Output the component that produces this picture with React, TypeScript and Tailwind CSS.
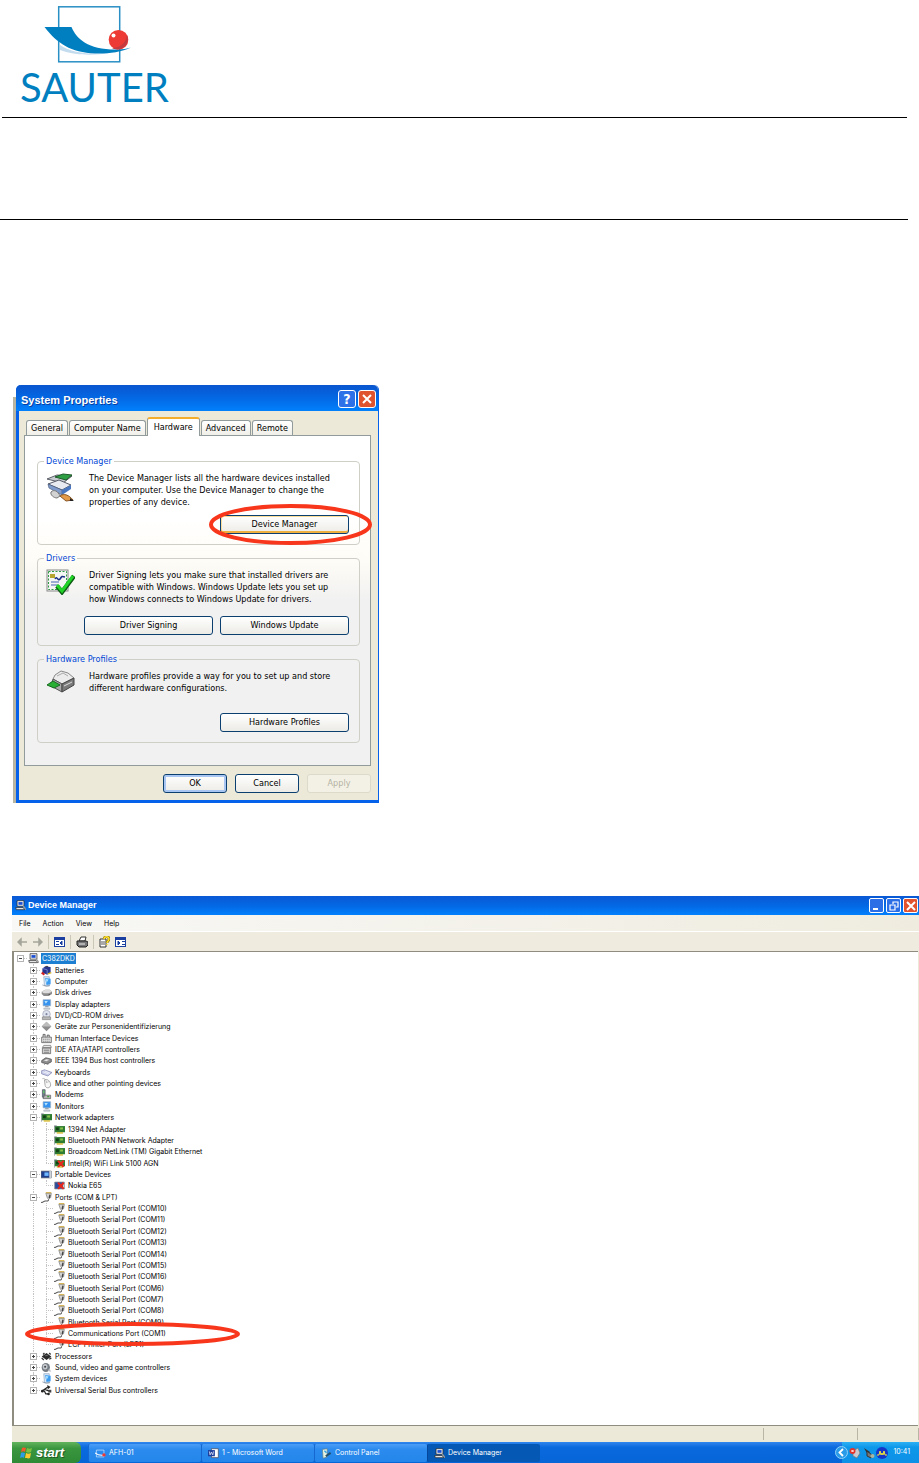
import React from 'react'
import { clsx } from 'clsx'

type IconName =
  | 'pc' | 'battery' | 'computer' | 'disk' | 'dvd' | 'diamond' | 'hid' | 'ide' | 'ieee'
  | 'keyboard' | 'mouse' | 'modem' | 'monitor' | 'nic' | 'nicOff' | 'portable'
  | 'phoneOff' | 'port' | 'cpu' | 'sound' | 'usb'

interface TreeItem {
  label: string
  icon: IconName
  level: 0 | 1 | 2
  open?: boolean
  last?: boolean
  circled?: boolean
}

const serialPort = (n: number): TreeItem => ({
  label: `Bluetooth Serial Port (COM${n})`,
  icon: 'port',
  level: 2,
})

const tree: TreeItem[] = [
  { label: 'C382DKD', icon: 'pc', level: 0, open: true },
  { label: 'Batteries', icon: 'battery', level: 1 },
  { label: 'Computer', icon: 'computer', level: 1 },
  { label: 'Disk drives', icon: 'disk', level: 1 },
  { label: 'Display adapters', icon: 'monitor', level: 1 },
  { label: 'DVD/CD-ROM drives', icon: 'dvd', level: 1 },
  { label: 'Geräte zur Personenidentifizierung', icon: 'diamond', level: 1 },
  { label: 'Human Interface Devices', icon: 'hid', level: 1 },
  { label: 'IDE ATA/ATAPI controllers', icon: 'ide', level: 1 },
  { label: 'IEEE 1394 Bus host controllers', icon: 'ieee', level: 1 },
  { label: 'Keyboards', icon: 'keyboard', level: 1 },
  { label: 'Mice and other pointing devices', icon: 'mouse', level: 1 },
  { label: 'Modems', icon: 'modem', level: 1 },
  { label: 'Monitors', icon: 'monitor', level: 1 },
  { label: 'Network adapters', icon: 'nic', level: 1, open: true },
  { label: '1394 Net Adapter', icon: 'nic', level: 2 },
  { label: 'Bluetooth PAN Network Adapter', icon: 'nic', level: 2 },
  { label: 'Broadcom NetLink (TM) Gigabit Ethernet', icon: 'nic', level: 2 },
  { label: 'Intel(R) WiFi Link 5100 AGN', icon: 'nicOff', level: 2, last: true },
  { label: 'Portable Devices', icon: 'portable', level: 1, open: true },
  { label: 'Nokia E65', icon: 'phoneOff', level: 2, last: true },
  { label: 'Ports (COM & LPT)', icon: 'port', level: 1, open: true },
  ...[10, 11, 12, 13, 14, 15, 16, 6, 7, 8, 9].map(serialPort),
  { label: 'Communications Port (COM1)', icon: 'port', level: 2, circled: true },
  { label: 'ECP Printer Port (LPT1)', icon: 'port', level: 2, last: true },
  { label: 'Processors', icon: 'cpu', level: 1 },
  { label: 'Sound, video and game controllers', icon: 'sound', level: 1 },
  { label: 'System devices', icon: 'computer', level: 1 },
  { label: 'Universal Serial Bus controllers', icon: 'usb', level: 1, last: true },
]

const nicShape = (
  <>
    <rect x="1" y="3" width="15" height="9" fill="#2f7d32" />
    <path d="M0 2v12M1 3h3" stroke="#6b7280" strokeWidth="1.5" />
    <rect x="3" y="5" width="4" height="4" fill="#123d16" />
    <rect x="9" y="5" width="4" height="3" fill="#8bc34a" />
    <path d="M4 13h9" stroke="#d9b92c" strokeWidth="2" />
  </>
)

const crossShape = <path d="M6 4l8 9M14 4l-8 9" stroke="#e8261c" strokeWidth="3" />

const icons: Record<IconName, React.ReactNode> = {
  pc: (
    <>
      <path d="M3 1h10v8H3z" fill="#f4f4f4" stroke="#222" />
      <path d="M5 3h6v4H5z" fill="#1d4fd0" />
      <path d="M1 11h11l2 3H2z" fill="#eee" stroke="#222" />
      <path d="M12 9l4 5" stroke="#999" strokeWidth="2" />
    </>
  ),
  battery: (
    <>
      <path d="M2 5l4-3 8 1v8l-5 3-7-3z" fill="#27348b" />
      <path d="M2 5l7 2v7" stroke="#8fa0e8" fill="none" />
      <path d="M1 11l4 3" stroke="#d02020" strokeWidth="3" />
      <path d="M10 13l5-2" stroke="#d9b92c" strokeWidth="2" />
      <path d="M5 2l4-1 2 2" fill="#222" />
    </>
  ),
  computer: (
    <>
      <path d="M4 1h8v13H5z" fill="#d6e6f7" stroke="#8ba6c2" />
      <path d="M6 3l8 1v8l-6 1z" fill="#3b9bf0" />
      <path d="M7 4l4 1-3 5z" fill="#a6e0ff" />
      <path d="M2 13l6 2 5-1" stroke="#7b8794" fill="none" />
    </>
  ),
  disk: (
    <>
      <path d="M1 7l5-3h7l3 3v3l-5 3H4l-3-3z" fill="#8c8c8c" />
      <path d="M1 7l5-3h7l3 3-5 2H4z" fill="#dcdcdc" />
      <path d="M11 11h2" stroke="#333" />
    </>
  ),
  dvd: (
    <>
      <circle cx="8" cy="6" r="5.5" fill="#dfe3f0" stroke="#9aa0b4" />
      <circle cx="8" cy="6" r="1.5" fill="#7e86a0" />
      <path d="M2 10h12v4H2z" fill="#b8b8b8" stroke="#808080" />
    </>
  ),
  diamond: (
    <>
      <path d="M8 1l7 7-7 7-7-7z" fill="#8c8c8c" />
      <path d="M8 1l7 7H1z" fill="#bdbdbd" />
    </>
  ),
  hid: (
    <>
      <path d="M1 6h14v8H1z" fill="#e6e6e6" stroke="#444" />
      <path d="M3 6V2h3v4M9 6V3h3v3" stroke="#444" fill="#ccc" />
      <path d="M3 9h10M3 12h10" stroke="#555" strokeDasharray="2 1" />
    </>
  ),
  ide: (
    <>
      <path d="M4 2h10l1 3H2z" fill="#eee" stroke="#666" />
      <path d="M2 6h12v8H2z" fill="#d8d8d8" stroke="#555" />
      <path d="M4 9h8M4 12h8" stroke="#555" />
    </>
  ),
  ieee: (
    <>
      <path d="M1 8l6-4 8 2v4l-6 3-8-2z" fill="#8e8e8e" stroke="#444" />
      <path d="M4 8l4-2 4 1-4 2z" fill="#e8e8e8" />
      <path d="M5 13v1M10 13v1" stroke="#333" />
    </>
  ),
  keyboard: (
    <>
      <path d="M0 6l5-2 11 4-6 5-9-3z" fill="#c7cbe8" stroke="#7d83ad" />
      <path d="M3 7l8 3M6 6l7 3" stroke="#fff" />
    </>
  ),
  mouse: (
    <>
      <path d="M5 3c4-3 9 2 9 7 0 5-7 6-8 1z" fill="#f7f7f7" stroke="#8a8a8a" />
      <path d="M2 1c3-1 5 1 6 5" stroke="#999" fill="none" />
      <path d="M7 7l5-2" stroke="#aaa" />
    </>
  ),
  modem: (
    <>
      <path d="M2 1h4v11H2z" fill="#6f7d8c" stroke="#4c5560" />
      <path d="M3 2h2v4H3z" fill="#63c564" />
      <path d="M5 9h9v5H3z" fill="#b4b4b4" stroke="#5d5d5d" />
      <path d="M9 11h3" stroke="#3aa53a" strokeWidth="2" />
    </>
  ),
  monitor: (
    <>
      <path d="M3 1h11v9H3z" fill="#3592ee" stroke="#9fb3c8" />
      <path d="M5 3h5l-3 4z" fill="#b5e4ff" />
      <path d="M6 10h5v2H6z" fill="#9aa4ae" />
      <path d="M4 13h9v2H4z" fill="#c9d2da" stroke="#8c959e" strokeWidth="0.5" />
    </>
  ),
  nic: nicShape,
  nicOff: (
    <>
      {nicShape}
      {crossShape}
    </>
  ),
  portable: (
    <>
      <path d="M0 3h15v10H0z" fill="#1e3f8f" stroke="#777" />
      <path d="M5 5h6v5H5z" fill="#6fb7ff" />
      <path d="M12 3h3v10h-3z" fill="#cfd4da" />
    </>
  ),
  phoneOff: (
    <>
      <path d="M1 3h14v10H1z" fill="#2a4d9d" stroke="#888" />
      <path d="M13 4h2v8h-2z" fill="#ccc" />
      {crossShape}
    </>
  ),
  port: (
    <>
      <path d="M7 2h8l-1 6-3 3-2-3z" fill="#d4d4d4" stroke="#777" />
      <path d="M7 1h8" stroke="#cfa73a" strokeWidth="1.5" />
      <path d="M13 4l-1 5" stroke="#444" strokeWidth="2" />
      <path d="M11 11c0 3-3 2-5 2s-3 3-6 2" stroke="#555" strokeWidth="1.5" fill="none" />
    </>
  ),
  cpu: (
    <>
      <path d="M8 3l7 5-7 5-7-5z" fill="#2a2a2a" />
      <path d="M3 5l2-2M1 10l3 3M12 12l3-2M12 3l2 2" stroke="#333" strokeWidth="2" />
      <path d="M6 7l4-1" stroke="#888" />
    </>
  ),
  sound: (
    <>
      <ellipse cx="7" cy="8" rx="6" ry="6.5" fill="#757b82" />
      <ellipse cx="6" cy="7" rx="3.5" ry="4" fill="#c5cad0" />
      <circle cx="6" cy="7" r="1.5" fill="#444" />
      <path d="M10 13l5 1-3-5" fill="#b9bec4" />
    </>
  ),
  usb: (
    <>
      <path d="M1 9l9-6M4 7l3 6h4M5 6l7 3" stroke="#222" strokeWidth="1.8" fill="none" />
      <path d="M9 0l5 3-4 3z" fill="#222" />
      <circle cx="2" cy="9" r="2" fill="#222" />
      <rect x="11" y="7" width="4" height="4" fill="#444" />
      <circle cx="11" cy="13" r="1.8" fill="#222" />
    </>
  ),
}

const Icon: React.FC<{ name: IconName }> = ({ name }) => (
  <svg viewBox="0 0 16 16" className="h-[11px] w-[11px] shrink-0" aria-hidden="true">
    {icons[name]}
  </svg>
)

// Red marker ring laid over a control
const Ring: React.FC<{ className: string; width: number; height: number }> = ({ className, width, height }) => (
  <svg
    viewBox={`0 0 ${width} ${height}`}
    className={clsx('pointer-events-none absolute z-10', className)}
    aria-hidden="true"
  >
    <ellipse
      cx={width / 2}
      cy={height / 2}
      rx={width / 2 - 2}
      ry={height / 2 - 2}
      fill="none"
      stroke="#f8361c"
      strokeWidth="4"
    />
  </svg>
)

const Logo: React.FC = () => (
  <div className="ml-[18px] flex flex-col">
    <svg viewBox="44 5 88 58" className="ml-6 h-[58px] w-[88px]" aria-hidden="true">
      <rect x="58.7" y="6.8" width="61" height="55" fill="none" stroke="#2a8fc5" strokeWidth="1.5" />
      <path d="M60 45c12 8 30 10 50 8-18 3-38 2-50-3z" fill="#c3dcee" />
      <path d="M44.500 27h27c5 12 17 23 46 22.500 5 0 10-1 13.500-2-10 5-25 6.500-36 6-24-1-38-10-50.500-26.500z" fill="#007fc0" />
      <circle cx="118.500" cy="39.800" r="9.800" fill="#ee3a34" />
      <path d="M127 35c4 9-6 18-15 13 8 0 14-5 15-13z" fill="#c23b41" />
      <circle cx="113.500" cy="35.500" r="2" fill="#fff" />
    </svg>
    <span className="mt-1 font-['Lato',sans-serif] text-[40px] leading-10 text-[#007fc0]">SAUTER</span>
  </div>
)

const XpButton: React.FC<{
  children: React.ReactNode
  className?: string
  variant?: 'default' | 'hot' | 'focus'
  disabled?: boolean
}> = ({ children, className, variant = 'default', disabled }) => (
  <button
    type="button"
    disabled={disabled}
    className={clsx(
      'h-[19px] rounded-[3px] border text-center leading-none',
      disabled
        ? 'border-[#dcdacb] bg-[#f3f1e6] text-[#b3b1a2]'
        : 'border-[#0b3f70] bg-linear-to-b from-white to-[#ecebe6]',
      variant === 'hot' && 'shadow-[inset_0_-2px_0_#f0b040,inset_1px_1px_0_#fbdc98]',
      variant === 'focus' && 'shadow-[inset_0_0_0_2px_#a9c6f3]',
      className,
    )}
  >
    {children}
  </button>
)

const Group: React.FC<{
  title: string
  icon: React.ReactNode
  text: string[]
  actionsClass: string
  children: React.ReactNode
}> = ({ title, icon, text, actionsClass, children }) => (
  <fieldset className="rounded-[4px] border border-[#cfcfc8] pr-[10px] pb-[10px] pl-2">
    <legend className="-ml-0.5 px-0.5 leading-3 text-[#0046d5]">{title}</legend>
    <div className="flex gap-[14px] pt-[5px]">
      {icon}
      <p className="whitespace-nowrap">
        {text.map((line) => (
          <span key={line} className="block">
            {line}
          </span>
        ))}
      </p>
    </div>
    <div className={clsx('flex justify-end gap-[7px]', actionsClass)}>{children}</div>
  </fieldset>
)

const DevicesIcon = (
  <svg viewBox="0 0 29 30" className="h-[30px] w-[29px] shrink-0" aria-hidden="true">
    <path d="M1 7l10-4 15 1-9 7z" fill="#c8ccd2" stroke="#5c6068" />
    <path d="M9 5l8-3 9 1-6 5z" fill="#2ea043" stroke="#205c2a" />
    <path d="M2 12l11-4 12 5-9 5z" fill="#e8ebf0" stroke="#555b66" />
    <path d="M2 12l14 6v5L3 16z" fill="#7f9ccc" stroke="#4b5d80" strokeWidth="0.7" />
    <path d="M16 18l9-5v4l-9 6z" fill="#4a78c0" />
    <path d="M5 20c3-3 7-1 9 4l-3 2c-3 0-7-3-6-6z" fill="#d2d2d2" stroke="#777" />
    <path d="M14 24c4-3 9-1 13 4l-7 1z" fill="#e39b4a" stroke="#865424" />
    <path d="M24 26l4 3h-4z" fill="#222" />
  </svg>
)

const SigningIcon = (
  <svg viewBox="0 0 29 26" className="h-[26px] w-[29px] shrink-0" aria-hidden="true">
    <rect x="1" y="1" width="21" height="21" fill="#f4f6f4" stroke="#888" />
    <rect x="2.500" y="2.500" width="18" height="18" fill="none" stroke="#2e9b44" strokeDasharray="2 1.500" />
    <rect x="4" y="5" width="5" height="4" fill="#b7a532" />
    <path d="M9 10c2-4 3 3 5 0s2-3 5-2" stroke="#1b2f86" strokeWidth="1.500" fill="none" />
    <path d="M5 13h8M5 16h7" stroke="#4560b0" />
    <path d="M11 17l5 6L28 7" stroke="#0c5c14" strokeWidth="4.500" fill="none" />
    <path d="M11 16l5 6L27 7" stroke="#22d428" strokeWidth="3" fill="none" />
  </svg>
)

const ProfilesIcon = (
  <svg viewBox="0 0 29 24" className="h-6 w-[29px] shrink-0" aria-hidden="true">
    <path d="M9 5l6-4 7 2 6 5-12 6L7 9z" fill="#ececec" stroke="#8a8a8a" />
    <path d="M7 9l9 5v8L5 16z" fill="#a9a9a9" stroke="#555" />
    <path d="M16 14l12-6v7l-12 7z" fill="#7a7a7a" stroke="#444" />
    <path d="M1 15l6-4 7 4-6 3z" fill="#29b034" stroke="#1a6b22" />
    <path d="M18 16l8-4" stroke="#ddd" />
    <path d="M11 6l6-3 5 3" stroke="#aaa" fill="none" />
  </svg>
)

const tabs = ['General', 'Computer Name', 'Hardware', 'Advanced', 'Remote']

const SystemProperties: React.FC = () => (
  <section className="flex w-[366px] font-['DejaVu_Sans_Condensed','Open_Sans',sans-serif] text-[9px] leading-3 text-black" aria-label="System Properties">
    <div className="mt-3 w-[3px] shrink-0 bg-[#b9b5a3]" />
    <div className="min-w-0 flex-1 rounded-t-[5px] border-r border-b-[3px] border-l-[3px] border-[#0560ea] bg-[#ece9d8]">
      <header className="-ml-[3px] flex h-[26px] items-center gap-0.5 rounded-t-[5px] bg-linear-to-b from-[#0a55cf] via-[#0468e4] to-[#0280fc] pr-0.5 pl-[5px]">
        <h2 className="flex-1 pt-1 font-['Liberation_Sans',sans-serif] text-[11px] font-bold text-white [text-shadow:1px_1px_#0a3ea0]">
          System Properties
        </h2>
        <button type="button" aria-label="Help" className="mt-0.5 h-[18px] w-[18px] rounded-[3px] border border-white bg-[#2e70e8] text-[14px] leading-none font-bold text-white">
          ?
        </button>
        <button type="button" aria-label="Close" className="mt-0.5 flex h-[18px] w-[18px] items-center justify-center rounded-[3px] border border-white bg-[#e0532f]">
          <svg viewBox="0 0 10 10" className="h-[10px] w-[10px]">
            <path d="M1 1l8 8M9 1l-8 8" stroke="#fff" strokeWidth="2" />
          </svg>
        </button>
      </header>

      <div className="pt-[6px] pr-[7px] pl-[5px]">
        <div role="tablist" className="flex h-[18px] items-end gap-px pl-0.5">
          {tabs.map((tab) => (
            <button
              key={tab}
              type="button"
              role="tab"
              aria-selected={tab === 'Hardware'}
              className={clsx(
                'rounded-t-[3px] border border-b-0 border-[#919b9c] px-1',
                tab === 'Hardware'
                  ? 'relative -mb-px h-[19px] border-t-2 border-t-[#f5ae2c] bg-white px-[6px] pb-px'
                  : 'h-[15px] bg-linear-to-b from-white to-[#f0efe8]',
              )}
            >
              {tab}
            </button>
          ))}
        </div>

        <div role="tabpanel" className="flex flex-col gap-[7px] border border-[#919b9c] bg-linear-to-b from-white from-25% via-[#fefcf6] via-38% to-[#f1f1f1] to-50% pt-[19px] pr-[10px] pb-[22px] pl-3">
          <Group
            title="Device Manager"
            icon={DevicesIcon}
            text={[
              'The Device Manager lists all the hardware devices installed',
              'on your computer. Use the Device Manager to change the',
              'properties of any device.',
            ]}
            actionsClass="mt-[7px]"
          >
            <div className="relative flex">
              <XpButton variant="hot" className="w-[129px]">Device Manager</XpButton>
              <Ring className="-top-[11px] -left-[11px] h-[41px] w-[163px]" width={163} height={41} />
            </div>
          </Group>
          <Group
            title="Drivers"
            icon={SigningIcon}
            text={[
              'Driver Signing lets you make sure that installed drivers are',
              'compatible with Windows. Windows Update lets you set up',
              'how Windows connects to Windows Update for drivers.',
            ]}
            actionsClass="mt-[11px]"
          >
            <XpButton className="w-[129px]">Driver Signing</XpButton>
            <XpButton className="w-[129px]">Windows Update</XpButton>
          </Group>
          <Group
            title="Hardware Profiles"
            icon={ProfilesIcon}
            text={[
              'Hardware profiles provide a way for you to set up and store',
              'different hardware configurations.',
            ]}
            actionsClass="mt-[19px]"
          >
            <XpButton className="w-[129px]">Hardware Profiles</XpButton>
          </Group>
        </div>

        <footer className="flex justify-end gap-2 pt-2 pb-[7px]">
          <XpButton variant="focus" className="w-16">OK</XpButton>
          <XpButton className="w-16">Cancel</XpButton>
          <XpButton className="w-16" disabled>Apply</XpButton>
        </footer>
      </div>
    </div>
  </section>
)

const Guide: React.FC<{ vertical?: boolean; last?: boolean; branch?: boolean; children?: React.ReactNode }> = ({
  vertical,
  last,
  branch,
  children,
}) => (
  <span className="relative flex w-[13px] shrink-0 items-center justify-center self-stretch">
    {vertical && (
      <span className={clsx('absolute top-0 left-[6px] border-l border-dotted border-[#c4c4c4]', last ? 'h-1/2' : 'h-full')} />
    )}
    {branch && <span className="absolute right-0 left-[6px] border-t border-dotted border-[#c4c4c4]" />}
    {children}
  </span>
)

const Toggle: React.FC<{ open?: boolean; label: string }> = ({ open, label }) => (
  <button
    type="button"
    aria-expanded={!!open}
    aria-label={label}
    className="relative flex h-[7px] w-[7px] items-center justify-center border border-[#b4b4b4] bg-white"
  >
    <svg viewBox="0 0 5 5" className="h-[5px] w-[5px] shrink-0">
      <path d={open ? 'M1 2.500h3' : 'M1 2.500h3M2.500 1v3'} stroke="#444" />
    </svg>
  </button>
)

const TreeRow: React.FC<{ item: TreeItem; tail: boolean }> = ({ item, tail }) => (
  <li className="relative flex flex-1 items-center whitespace-nowrap">
    {item.level === 0 && (
      <Guide branch>
        <Toggle open label={item.label} />
      </Guide>
    )}
    {item.level === 1 && (
      <>
        <Guide />
        <Guide vertical branch last={tail}>
          <Toggle open={item.open} label={item.label} />
        </Guide>
      </>
    )}
    {item.level === 2 && (
      <>
        <Guide />
        <Guide vertical />
        <Guide vertical branch last={item.last} />
      </>
    )}
    <span className="ml-px flex items-center gap-0.5">
      <Icon name={item.icon} />
      <span className={clsx('px-px leading-[11px]', item.level === 0 && 'bg-[#1c7fd2] text-white')}>{item.label}</span>
    </span>
    {item.circled && <Ring className="-top-[6px] left-[11px] h-6 w-[215px]" width={215} height={24} />}
  </li>
)

const ToolSeparator = () => <span className="h-[14px] w-px bg-[#cbc7b6]" />

const Toolbar: React.FC = () => (
  <div role="toolbar" className="flex h-5 items-center gap-[5px] border-t border-white bg-[#efecdf] pl-[5px]">
    <button type="button" aria-label="Back">
      <svg viewBox="0 0 10 10" className="h-[10px] w-[10px]">
        <path d="M4 2L1 5l3 3zM3 5h7" stroke="#a5a59c" strokeWidth="1.500" fill="#a5a59c" />
      </svg>
    </button>
    <button type="button" aria-label="Forward">
      <svg viewBox="0 0 10 10" className="ml-px h-[10px] w-[10px]">
        <path d="M6 2l3 3-3 3zM7 5H0" stroke="#a5a59c" strokeWidth="1.500" fill="#a5a59c" />
      </svg>
    </button>
    <ToolSeparator />
    <button type="button" aria-label="Show console tree">
      <svg viewBox="0 0 11 10" className="h-[10px] w-[11px]">
        <path d="M0 0h11v10H0z" fill="#1a3fa0" />
        <path d="M1 3h9v6H1z" fill="#fff" />
        <path d="M2 4.500h3M2 7.500h3M8 4l-2 2 2 2z" stroke="#1a3fa0" fill="#1a3fa0" />
      </svg>
    </button>
    <ToolSeparator />
    <button type="button" aria-label="Print">
      <svg viewBox="0 0 12 12" className="h-3 w-3">
        <path d="M3 5l2-4h5L9 5z" fill="#fff" stroke="#333" />
        <path d="M1 5h9l2 1v3l-2 2H3L1 9z" fill="#777" stroke="#222" />
        <path d="M3 8h6" stroke="#eee" />
      </svg>
    </button>
    <ToolSeparator />
    <button type="button" aria-label="Help">
      <svg viewBox="0 0 11 12" className="h-3 w-[11px]">
        <path d="M1 3h6v8H1z" fill="#fff" stroke="#333" />
        <path d="M2 6h4M2 8h4" stroke="#555" />
        <path d="M5 3c0-3 5-3 5 0 0 2-2 2-2 4" stroke="#7c6a00" strokeWidth="2.600" fill="none" />
        <path d="M5 3c0-3 5-3 5 0 0 2-2 2-2 4M8 8v1" stroke="#ffe02e" strokeWidth="1.500" fill="none" />
      </svg>
    </button>
    <button type="button" aria-label="Show action pane">
      <svg viewBox="0 0 11 10" className="h-[10px] w-[11px]">
        <path d="M0 0h11v10H0z" fill="#1a3fa0" />
        <path d="M1 3h9v6H1z" fill="#fff" />
        <path d="M7 4.500h3M7 7.500h3M3 4l2 2-2 2z" stroke="#1a3fa0" fill="#1a3fa0" />
      </svg>
    </button>
  </div>
)

const captionButton = 'flex h-[15px] w-[15px] items-center justify-center rounded-[2px] border border-white'

const DeviceManager: React.FC = () => (
  <section className="bg-[#ece9d8] text-black" aria-label="Device Manager">
    <header className="flex h-[19px] items-center gap-0.5 bg-linear-to-b from-[#0a58d4] via-[#0468e4] to-[#0280fc] pr-px pl-[3px]">
      <Icon name="pc" />
      <h2 className="flex-1 font-['Liberation_Sans',sans-serif] text-[9px] font-bold text-white">Device Manager</h2>
      <button type="button" aria-label="Minimize" className={clsx(captionButton, 'bg-[#2b6ee6]')}>
        <svg viewBox="0 0 10 10" className="h-[10px] w-[10px]">
          <path d="M1 8h5" stroke="#fff" strokeWidth="2" />
        </svg>
      </button>
      <button type="button" aria-label="Restore" className={clsx(captionButton, 'bg-[#2b6ee6]')}>
        <svg viewBox="0 0 10 10" className="h-[10px] w-[10px]">
          <path d="M4 3V1h5v5H7M1 4h5v5H1z" stroke="#fff" strokeWidth="1.200" fill="none" />
        </svg>
      </button>
      <button type="button" aria-label="Close" className={clsx(captionButton, 'bg-[#e2542f]')}>
        <svg viewBox="0 0 10 10" className="h-[10px] w-[10px]">
          <path d="M1 1l8 8M9 1l-8 8" stroke="#fff" strokeWidth="2" />
        </svg>
      </button>
    </header>

    <div className="font-['Inter',sans-serif] text-[7px] leading-none">
      <nav className="flex h-4 items-center gap-3 bg-linear-to-r from-[#f8f8f6] to-[#efecdf] pl-[7px]">
        {['File', 'Action', 'View', 'Help'].map((item) => (
          <button key={item} type="button">
            {item}
          </button>
        ))}
      </nav>
      <Toolbar />

      <div className="mr-px min-h-[475px] border-t border-b border-l-2 border-[#8f8d80] bg-white pt-px">
        <ul className="flex h-[443px] flex-col">
          {tree.map((item, i) => (
            <TreeRow key={item.label} item={item} tail={i === tree.length - 1} />
          ))}
        </ul>
      </div>

      <div className="flex h-4 justify-end py-0.5">
        <span className="w-[94px] border-l border-[#b9b6a5]" />
        <span className="w-[62px] border-x border-[#b9b6a5]" />
      </div>
    </div>
  </section>
)

const tasks = [
  {
    label: 'AFH-01',
    icon: (
      <>
        <path d="M2 3h11v10H2z" fill="none" stroke="#cfe6ff" />
        <path d="M0 7c5 4 9 4 14 3" stroke="#fff" strokeWidth="1.500" fill="none" />
        <circle cx="13" cy="10" r="2.500" fill="#ee3a34" />
      </>
    ),
  },
  {
    label: '1 - Microsoft Word',
    icon: (
      <>
        <path d="M5 1h10v13H5z" fill="#fff" stroke="#445" />
        <path d="M0 3h10v9H0z" fill="#1e3f9c" />
        <path d="M2 5l1 5 2-4 2 4 1-5" stroke="#fff" fill="none" />
      </>
    ),
  },
  {
    label: 'Control Panel',
    icon: (
      <>
        <path d="M2 2l7-1v12l-6 2z" fill="#e8f2e0" stroke="#5c7d8c" />
        <path d="M7 12l7-5" stroke="#23516e" strokeWidth="3" />
        <path d="M5 4l3 3" stroke="#37a0e0" strokeWidth="2" />
      </>
    ),
  },
  { label: 'Device Manager', icon: icons.pc, active: true },
]

const Taskbar: React.FC = () => (
  <footer className="flex h-[21px] bg-linear-to-b from-[#2f86ee] via-[#0a6ade] via-25% to-[#0666d8] font-['Inter',sans-serif] text-[7px] text-white">
    <button type="button" className="flex w-[69px] items-center gap-1 rounded-r-[6px] bg-linear-to-b from-[#62b45c] via-[#3b9640] via-30% to-[#2f8a35] pl-2">
      <svg viewBox="0 0 12 12" className="h-3 w-3">
        <path d="M2 1c2-1 3 0 4 0L5 5C4 4 3 4 1 5z" fill="#f0592b" />
        <path d="M7 1c2 1 3 1 5 0l-1 4C9 6 8 6 6 5z" fill="#7cc142" />
        <path d="M1 6c2-1 3 0 4 0l-1 5c-1-1-2-1-4 0z" fill="#2e9be6" />
        <path d="M6 6c2 1 3 1 5 0l-1 5c-2 1-3 0-5 0z" fill="#fdc82f" />
      </svg>
      <span className="font-['Liberation_Sans',sans-serif] text-[13px] font-bold italic [text-shadow:1px_1px_#1f5c24]">start</span>
    </button>
    <div className="flex flex-1 pt-0.5 pb-px pl-[7px]">
      {tasks.map((task) => (
        <button
          key={task.label}
          type="button"
          className={clsx(
            'flex w-[113px] items-center gap-[3px] rounded-[2px] border-l pl-[6px]',
            task.active ? 'border-[#04479c] bg-[#0558b4]' : 'border-[#1668d0] bg-linear-to-b from-[#4a9df6] via-[#2b8bee] via-30% to-[#2486ea]',
          )}
        >
          <svg viewBox="0 0 16 16" className="h-[11px] w-[11px]">
            {task.icon}
          </svg>
          {task.label}
        </button>
      ))}
    </div>
    <div className="flex items-center gap-px bg-linear-to-b from-[#2cb0f4] via-[#0e98ea] via-25% to-[#0d90e6] pr-[9px]">
      <button type="button" aria-label="Show hidden icons" className="-ml-[7px]">
        <svg viewBox="0 0 13 13" className="h-[13px] w-[13px]">
          <circle cx="6.500" cy="6.500" r="6" fill="#2a9be8" stroke="#8fd0f8" />
          <path d="M8 3L4.500 6.500 8 10" stroke="#fff" strokeWidth="1.800" fill="none" />
        </svg>
      </button>
      <svg viewBox="0 0 12 12" className="h-3 w-3" aria-hidden="true">
        <path d="M4 4l5-3 2 5-3 5-4-2z" fill="#c9c9cf" stroke="#777" strokeWidth="0.700" />
        <circle cx="3.500" cy="4" r="3" fill="#e3342b" />
        <path d="M2.500 3l2 2M4.500 3l-2 2" stroke="#fff" />
      </svg>
      <svg viewBox="0 0 12 12" className="ml-px h-3 w-3" aria-hidden="true">
        <path d="M1 1l6 4-2 3z" fill="#333" />
        <path d="M4 4l5 4-1 3-4-2z" fill="#777" stroke="#333" />
        <circle cx="9.500" cy="9" r="2" fill="#a8b5a0" />
      </svg>
      <svg viewBox="0 0 12 12" className="h-3 w-3" aria-hidden="true">
        <circle cx="6" cy="6" r="6" fill="#1536c8" />
        <path d="M1 8h2l1-4 1 4 1-2 1 2 1-4 1 4h2" stroke="#f4e93a" fill="none" />
      </svg>
      <time className="ml-1">10:41</time>
    </div>
  </footer>
)

export default function App() {
  return (
    <main className="flex min-h-screen flex-col overflow-hidden bg-white">
      <header className="mr-3 ml-0.5 border-b border-black pt-[5px] pb-[10px]">
        <Logo />
      </header>
      <hr className="mt-[101px] mr-[11px] border-black" />
      <div className="mt-[165px] ml-[13px]">
        <SystemProperties />
      </div>
      <div className="mt-[93px] ml-3">
        <DeviceManager />
        <Taskbar />
      </div>
    </main>
  )
}
